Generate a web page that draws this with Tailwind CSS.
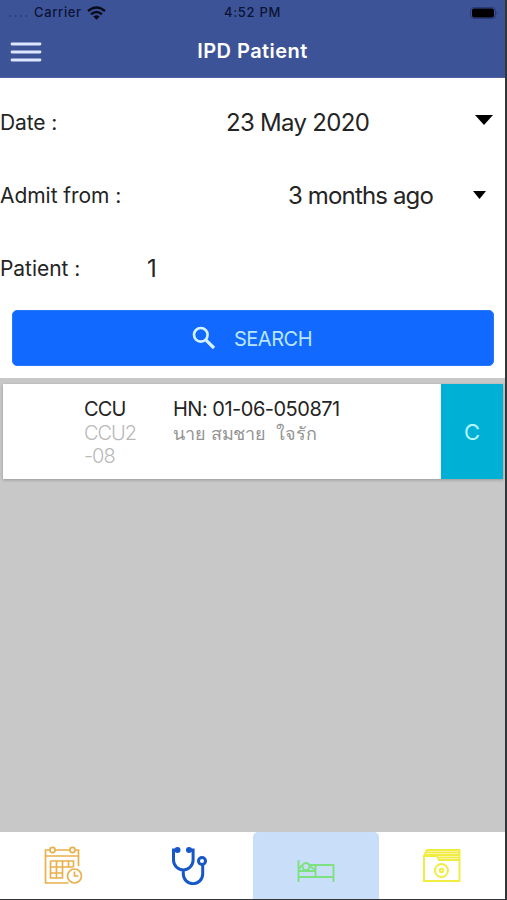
<!DOCTYPE html>
<html lang="en">
<head>
<meta charset="utf-8">
<title>IPD Patient</title>
<script src="https://cdn.jsdelivr.net/npm/@tailwindcss/browser@4"></script>
</head>
<body class="bg-[#333639]">
<div class="w-[505px] h-[899px] flex flex-col bg-white font-[Inter,'Noto_Sans',sans-serif] text-[#242424] overflow-hidden whitespace-nowrap">
  <header class="h-[78px] shrink-0 bg-[#3d5398] flex flex-col border-b border-[#50609f]">
    <div class="h-[26px] grid grid-cols-3 items-center text-[13px] font-medium text-[#0b1434]">
      <div class="flex items-center pl-2">
        <svg class="w-[21px] h-2 mr-[5px]" viewBox="0 0 21 8" fill="#2c3d7c"><circle cx="2" cy="7" r="1"/><circle cx="7.500" cy="7" r="1"/><circle cx="13" cy="7" r="1"/><circle cx="18.500" cy="7" r="1"/></svg>
        <span class="tracking-[0.65px]">Carrier</span>
        <svg class="w-[19px] h-[14px] ml-[5px]" viewBox="0 0 19 14" fill="none" stroke="#060b1c" stroke-width="2.400"><path d="M1 5Q9.500-2 18 5M4 8.300Q9.500 3.800 15 8.300"/><path d="M6.300 10.500Q9.500 8 12.700 10.500L9.500 13.700Z" fill="#060b1c" stroke="none"/></svg>
      </div>
      <div class="text-center tracking-[0.7px]">4:52 PM</div>
      <div class="flex justify-end pr-[7px]">
        <svg class="w-[28px] h-[12px]" viewBox="0 0 28 12"><rect x=".5" y=".5" width="25" height="11" rx="3" fill="none" stroke="#293b78"/><rect x="2" y="1.500" width="22" height="9" rx="2" fill="#000"/><path d="M26.500 4v4q1.500-2 0-4" fill="#293b78"/></svg>
      </div>
    </div>
    <div class="h-[52px] grid grid-cols-[100px_1fr_100px] items-center">
      <svg class="w-[32px] h-[22px] ml-[10px] mt-[2px]" viewBox="0 0 32 22" stroke="#dce6ff" stroke-width="2.800" stroke-linecap="round"><path d="M2 3h28M2 11h28M2 19h28"/></svg>
      <h1 class="text-center text-[20px] font-semibold text-white tracking-[0.45px]">IPD Patient</h1>
    </div>
  </header>
  <section class="h-[232px] shrink-0 pt-[8px] flex flex-col">
    <div class="h-[73px] flex items-center">
      <span class="w-[226px] text-[21px] tracking-[-0.1px]">Date :</span>
      <span class="text-[24px] tracking-[-0.7px]">23 May 2020</span>
      <svg class="w-[18px] h-[10px] ml-auto mr-[12px] mb-[6px]" viewBox="0 0 18 10"><path d="M0 0h18L9 10z"/></svg>
    </div>
    <div class="h-[73px] flex items-center">
      <span class="w-[288px] text-[21px] tracking-[-0.05px]">Admit from :</span>
      <span class="text-[24px] tracking-[-0.85px]">3 months ago</span>
      <svg class="w-[13px] h-[8px] ml-auto mr-[19px] mb-[2px]" viewBox="0 0 13 8"><path d="M0 0h13L6.500 8z"/></svg>
    </div>
    <div class="h-[73px] flex items-center">
      <span class="w-[147px] text-[21px] tracking-[-0.05px]">Patient :</span>
      <span class="text-[24px]">1</span>
    </div>
  </section>
  <div class="h-[68px] shrink-0 pl-[12px] pr-[11px]">
    <button class="w-full h-[56px] rounded-[5px] bg-[#1269ff] flex items-center pl-[179px] text-[#b9e6ff] border border-[#2877fb]">
      <svg class="w-[24px] h-[24px] mr-[18px] shrink-0" viewBox="0 0 24 24" fill="none" stroke="#d4f3ff" stroke-width="2.600"><circle cx="8.800" cy="8.800" r="6.800"/><path d="M13.800 13.800L22 22" stroke-width="3.200"/></svg>
      <span class="text-[20px] tracking-[-0.5px] pt-px">SEARCH</span>
    </button>
  </div>
  <main class="flex-1 bg-[#c8c8c8] pt-[6px] pl-[3px] pr-[2px]">
    <article class="h-[95px] bg-white flex shadow-[0_1px_3px_rgba(0,0,0,0.25)]">
      <div class="w-[89px] ml-[81px] pt-[14px] text-[20px] leading-[23px]">
        <div class="tracking-[-0.8px]">CCU</div>
        <div class="font-light text-[#b9b9b9] tracking-[-1px] pt-px">CCU2<br>-08</div>
      </div>
      <div class="pt-[12px] flex-1">
        <div class="text-[20px] leading-[26px] tracking-[-0.5px]">HN: 01-06-050871</div>
        <div class="text-[18px] leading-[24px] tracking-[-0.1px] text-[#939393]" lang="th">นาย สมชาย &nbsp;ใจรัก</div>
      </div>
      <div class="w-[62px] bg-[#00b1d5] flex items-center justify-center text-[22px] text-[#b5f6ff]"><span class="pt-px">C</span></div>
    </article>
  </main>
  <nav class="h-[67px] shrink-0 bg-white grid grid-cols-4">
    <div class="flex items-center justify-center">
      <svg class="w-[39px] h-[39px]" viewBox="0 0 38 39" fill="none" stroke="#e9b04c" stroke-width="1.700"><path d="M6 4H1v33h23M11 4h15M31 4h3v16M1 10h33"/><circle cx="8" cy="4" r="2.600"/><circle cx="28" cy="4" r="2.600"/><path d="M6 15h23v6M6 15v17h12V15M12 15v17M24 15v6M6 21h23M6 27h12"/><circle cx="30" cy="30" r="7"/><path d="M30 25.500V30h4"/></svg>
    </div>
    <div class="flex items-center justify-center">
      <svg class="w-[36px] h-[38px]" viewBox="0 0 36 38" fill="none" stroke="#1757c7" stroke-width="3"><path d="M6 3H2.500v10a9.800 10 0 0 0 19.600 0V3H18M12.300 23v4a9.700 9.700 0 0 0 19.400 0V18"/><circle cx="31" cy="14" r="3.500"/><g fill="#1757c7" stroke="none"><circle cx="6.500" cy="3" r="3"/><circle cx="18" cy="3" r="3"/></g></svg>
    </div>
    <div class="bg-[#c9def8] rounded-t-[5px] flex justify-center pt-[28px]">
      <svg class="w-[38px] h-[23px]" viewBox="0 0 38 23" fill="none" stroke="#7de180" stroke-width="1.900"><path d="M1.500 0v22M1.500 17h35M36.500 22V5H18.500v12M1.500 11h17M13 5h6"/><circle cx="9" cy="6.500" r="3.500"/><path d="M2 9l3-4M12.500 6l6 4"/></svg>
    </div>
    <div class="flex items-center justify-center">
      <svg class="w-[38px] h-[34px]" viewBox="0 0 38 34" fill="none" stroke="#f1ec42" stroke-width="1.900"><path d="M1 32V7h13l2 4h20.500v21z"/><path d="M1 7l3-6h32.500v10M3 3.500h33M3 6h33M16 8.500h20"/><circle cx="18.500" cy="21.500" r="6.500"/><circle cx="18.500" cy="21.500" r="1.700"/></svg>
    </div>
  </nav>
</div>
</body>
</html>
